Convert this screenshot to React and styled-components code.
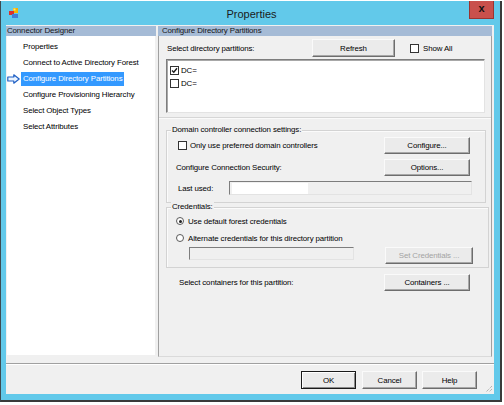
import React from "react"
import styled, {createGlobalStyle} from "styled-components"

const GlobalStyle = createGlobalStyle`
  body {
    margin: 0;
    background: #fff;
    font-family: "Liberation Sans", Arial, sans-serif;
  }
`

const Window = styled.div`
  box-sizing: border-box;
  width: 502px;
  height: 401px;
  margin-top: 1px;
  display: flex;
  flex-direction: column;
  background: #62c9ea;
  border-left: 1px solid #3d4b52;
  border-right: 2px solid #3a3a3a;
  border-bottom: 2px solid #3a3a3a;
`

const TitleBar = styled.div`
  height: 24px;
  flex: none;
  display: grid;
  grid-template-columns: 1fr auto 1fr;
  padding: 0 6px 0 8px;
`

const AppIcon = styled.svg`
  margin-top: 7px;
`

const Title = styled.div`
  padding-top: 7px;
  font-size: 11px;
  line-height: 13px;
  color: #1b1b1b;
`

const CloseButton = styled.div`
  justify-self: end;
  box-sizing: border-box;
  width: 25px;
  height: 18px;
  background: #c9504c;
  border: 1px solid #9a3431;
  border-top: none;
  display: flex;
  align-items: center;
  justify-content: center;
  font-size: 11px;
  font-weight: bold;
  color: #111;
  line-height: 1;
  padding-bottom: 2px;
`

const Client = styled.div`
  flex: 1;
  margin: 0 6px 6px 5px;
  background: #f0f0f0;
  display: flex;
  flex-direction: column;
  font-size: 7.9px;
  letter-spacing: -0.12px;
  color: #000;
`

const Main = styled.div`
  height: 332px;
  display: flex;
`

const LeftPane = styled.div`
  width: 150px;
  display: flex;
  flex-direction: column;
  padding-top: 1px;
`

const RightPane = styled.div`
  width: 334px;
  margin-left: 2px;
  display: flex;
  flex-direction: column;
  padding-top: 1px;
`

const PaneHeader = styled.div`
  height: 10px;
  line-height: 10px;
  background: #a5bbd6;
  color: #151515;
  padding-left: ${(p) => p.$indent}px;
  white-space: nowrap;
`

const NavList = styled.div`
  flex: 1;
  margin: 0 1px 2px 1px;
  background: #fff;
  padding-top: 3px;
`

const NavItem = styled.div`
  height: 16px;
  display: flex;
  align-items: center;
`

const ArrowSlot = styled.div`
  width: 14px;
  display: flex;
  align-items: center;
`

const NavLabel = styled.span`
  padding: 1px 2px;
  line-height: 12px;
  white-space: nowrap;
  background: ${(p) => (p.$active ? "#3399ff" : "transparent")};
  color: ${(p) => (p.$active ? "#fff" : "#000")};
`

const PaneBody = styled.div`
  flex: 1;
  background: #f0f0f0;
  border-left: 1px solid #a0a0a0;
  border-right: 1px solid #a0a0a0;
  border-bottom: 1px solid #dadada;
  padding: 3px 0 0 7px;
  display: flex;
  flex-direction: column;
  align-items: flex-start;
`

const TopRow = styled.div`
  height: 18px;
  display: flex;
  align-items: center;
`

const Label = styled.span`
  white-space: nowrap;
  width: ${(p) => (p.$w ? `${p.$w}px` : "auto")};
  padding-left: ${(p) => p.$pad || 0}px;
  flex: none;
  box-sizing: border-box;
`

const Button = styled.div`
  box-sizing: border-box;
  width: ${(p) => p.$w}px;
  height: ${(p) => p.$h || 17}px;
  flex: none;
  display: flex;
  align-items: center;
  justify-content: center;
  white-space: nowrap;
  color: ${(p) => (p.$disabled ? "#a3a3a3" : "#000")};
  background: #ebebeb;
  border: 1px solid;
  border-color: ${(p) =>
    p.$default ? "#1a1a1a" : "#fafafa #6d6d6d #6d6d6d #fafafa"};
  box-shadow: ${(p) =>
    p.$default
      ? "inset 1px 1px 0 #fff, inset -1px -1px 0 #8a8a8a"
      : "inset -1px -1px 0 #a8a8a8"};
`

const CheckRow = styled.label`
  display: flex;
  align-items: center;
  gap: ${(p) => p.$gap || 3}px;
  margin-left: ${(p) => p.$ml || 0}px;
  white-space: nowrap;
`

const CheckBox = styled.span`
  box-sizing: border-box;
  width: 9px;
  height: 9px;
  flex: none;
  background: #fff;
  border: 1px solid #333;
  display: flex;
  align-items: center;
  justify-content: center;
`

const Radio = styled.span`
  box-sizing: border-box;
  width: 8px;
  height: 8px;
  flex: none;
  border-radius: 50%;
  background: #fff;
  border: 1px solid #5a5a5a;
  display: flex;
  align-items: center;
  justify-content: center;

  &::after {
    content: "";
    width: 3px;
    height: 3px;
    border-radius: 50%;
    background: ${(p) => (p.$on ? "#222" : "transparent")};
  }
`

const ListBox = styled.div`
  box-sizing: border-box;
  width: 319px;
  height: 54px;
  margin-top: 2px;
  background: #fff;
  border: 1px solid;
  border-color: #7d7d7d #e3e3e3 #e3e3e3 #7d7d7d;
  box-shadow: inset 1px 1px 0 #a8a8a8;
  padding: 4px 3px 0;
`

const ListRow = styled.div`
  height: 13px;
  display: flex;
  align-items: center;
`

const Divider = styled.div`
  width: 332px;
  margin: 4px 0 0 -7px;
  border-top: 1px solid #d6d6d6;
  border-bottom: 1px solid #fafafa;
`

const Group = styled.div`
  box-sizing: border-box;
  width: ${(p) => p.$w}px;
  margin-top: ${(p) => p.$mt}px;
  border: 1px solid #d3d3d3;
  box-shadow: inset 1px 1px 0 #fbfbfb;
  display: flex;
  flex-direction: column;
  align-items: flex-start;
`

const GroupTitle = styled.span`
  margin: -6px 0 0 4px;
  padding: 0 1px;
  line-height: 10px;
  background: #f0f0f0;
  white-space: nowrap;
`

const GroupGrid = styled.div`
  align-self: stretch;
  display: grid;
  grid-template-columns: 1fr 86px;
  row-gap: 5px;
  align-items: center;
  padding: 2px 15px 7px 9px;
`

const WideRow = styled.div`
  grid-column: 1 / -1;
  display: flex;
  align-items: center;
`

const Field = styled.div`
  box-sizing: border-box;
  width: ${(p) => p.$w}px;
  height: ${(p) => p.$h}px;
  margin-left: ${(p) => p.$ml || 0}px;
  flex: none;
  background: #f0f0f0;
  border: 1px solid;
  border-color: #7d7d7d #e3e3e3 #e3e3e3 #7d7d7d;
  padding: 1px 0 0 2px;
`

const Redacted = styled.div`
  width: ${(p) => p.$w}px;
  height: 100%;
  background: #fff;
`

const GroupStack = styled.div`
  align-self: stretch;
  display: flex;
  flex-direction: column;
  padding: 3px 15px 3px 9px;
`

const RadioRow = styled(CheckRow)`
  height: 12px;
  margin-top: ${(p) => p.$mt || 0}px;
`

const CredRow = styled.div`
  display: flex;
  align-items: flex-start;
  margin-top: 3px;
`

const ContainersRow = styled.div`
  margin-top: 6px;
  display: flex;
  align-items: center;
`

const Separator = styled.div`
  margin-top: 6px;
  border-top: 1px solid #a0a0a0;
  border-bottom: 1px solid #fff;
`

const Footer = styled.div`
  flex: 1;
  display: flex;
  justify-content: flex-end;
  align-items: flex-start;
  padding: 6px 1px 0 0;
  gap: 5px;
`

const Grip = styled.svg`
  align-self: flex-end;
  margin: 0 0 1px 3px;
`

const navItems = [
  "Properties",
  "Connect to Active Directory Forest",
  "Configure Directory Partitions",
  "Configure Provisioning Hierarchy",
  "Select Object Types",
  "Select Attributes",
]

const Tick = () => (
  <svg width="7" height="7" viewBox="0 0 7 7">
    <path d="M1 3.4 L2.8 5.3 L6 1.3" fill="none" stroke="#1c1c1c" strokeWidth="1.4" />
  </svg>
)

const NavArrow = () => (
  <svg width="13" height="10" viewBox="0 0 13 10">
    <polygon
      points="0.8,3 6.8,3 6.8,0.8 12.2,5 6.8,9.2 6.8,7 0.8,7"
      fill="#e9f3ff"
      stroke="#1f5fc4"
      strokeWidth="1.2"
      strokeLinejoin="round"
    />
  </svg>
)

const App = () => {
  const active = "Configure Directory Partitions"
  return (
    <Window>
      <GlobalStyle />
      <TitleBar>
        <AppIcon width="10" height="10" viewBox="0 0 10 10">
          <rect x="4" y="0" width="5" height="5" fill="#f5b400" />
          <rect x="0" y="3" width="5" height="4" fill="#d9302a" />
          <rect x="3" y="6" width="6" height="4" fill="#3f7fd6" />
          <rect x="4.5" y="0.5" width="2" height="2" fill="#ffe680" />
        </AppIcon>
        <Title>Properties</Title>
        <CloseButton>x</CloseButton>
      </TitleBar>
      <Client>
        <Main>
          <LeftPane>
            <PaneHeader $indent={1}>Connector Designer</PaneHeader>
            <NavList>
              {navItems.map((item) => (
                <NavItem key={item}>
                  <ArrowSlot>{item === active ? <NavArrow /> : null}</ArrowSlot>
                  <NavLabel $active={item === active}>{item}</NavLabel>
                </NavItem>
              ))}
            </NavList>
          </LeftPane>
          <RightPane>
            <PaneHeader $indent={4}>Configure Directory Partitions</PaneHeader>
            <PaneBody>
              <TopRow>
                <Label $w={146} $pad={1}>Select directory partitions:</Label>
                <Button $w={83} $h={18}>Refresh</Button>
                <CheckRow $ml={15} $gap={4}>
                  <CheckBox />
                  Show All
                </CheckRow>
              </TopRow>
              <ListBox>
                <ListRow>
                  <CheckRow $gap={2}>
                    <CheckBox>
                      <Tick />
                    </CheckBox>
                    DC=
                  </CheckRow>
                </ListRow>
                <ListRow>
                  <CheckRow $gap={2}>
                    <CheckBox />
                    DC=
                  </CheckRow>
                </ListRow>
              </ListBox>
              <Divider />
              <Group $w={320} $mt={11}>
                <GroupTitle>Domain controller connection settings:</GroupTitle>
                <GroupGrid>
                  <CheckRow $ml={2} $gap={3}>
                    <CheckBox />
                    Only use preferred domain controllers
                  </CheckRow>
                  <Button $w={86}>Configure...</Button>
                  <Label>Configure Connection Security:</Label>
                  <Button $w={86}>Options...</Button>
                  <WideRow>
                    <Label $w={53} $pad={2}>Last used:</Label>
                    <Field $w={243} $h={14}>
                      <Redacted $w={76} />
                    </Field>
                  </WideRow>
                </GroupGrid>
              </Group>
              <Group $w={323} $mt={4}>
                <GroupTitle>Credentials:</GroupTitle>
                <GroupStack>
                  <RadioRow $gap={4}>
                    <Radio $on />
                    Use default forest credentials
                  </RadioRow>
                  <RadioRow $gap={4} $mt={5}>
                    <Radio />
                    Alternate credentials for this directory partition
                  </RadioRow>
                  <CredRow>
                    <Field $w={165} $h={13} $ml={13} />
                    <Button $w={88} $disabled style={{marginLeft: "auto"}}>
                      Set Credentials ...
                    </Button>
                  </CredRow>
                </GroupStack>
              </Group>
              <ContainersRow>
                <Label $w={218} $pad={13}>Select containers for this partition:</Label>
                <Button $w={86}>Containers ...</Button>
              </ContainersRow>
            </PaneBody>
          </RightPane>
        </Main>
        <Separator />
        <Footer>
          <Button $w={55} $h={18} $default>OK</Button>
          <Button $w={55} $h={18} style={{marginLeft: 1}}>Cancel</Button>
          <Button $w={55} $h={18}>Help</Button>
          <Grip width="8" height="8" viewBox="0 0 8 8">
            <path d="M7 1 L1 7 M7 4 L4 7 M7 7 L7 7" stroke="#9a9a9a" strokeWidth="1" strokeDasharray="1 1" />
          </Grip>
        </Footer>
      </Client>
    </Window>
  )
}

export default App
